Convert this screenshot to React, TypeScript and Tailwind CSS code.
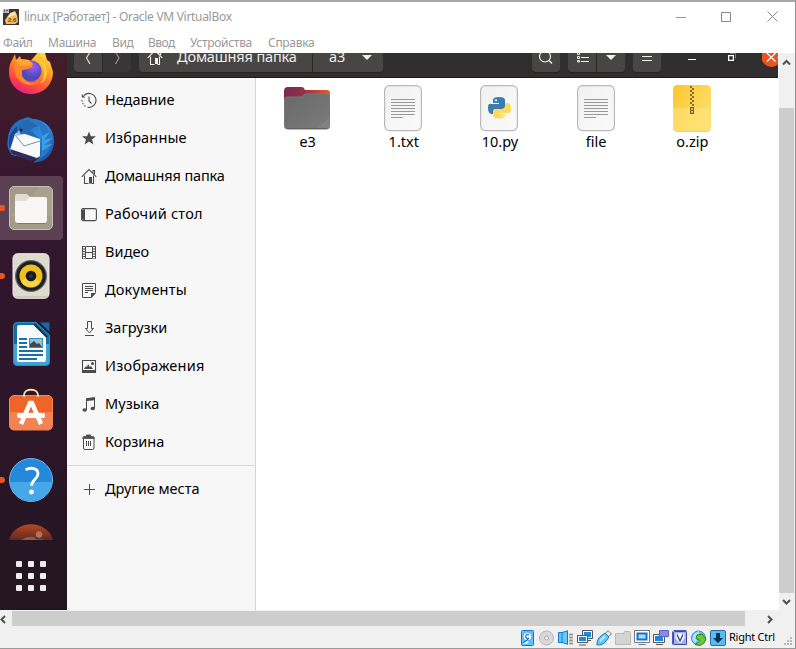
import React from "react";

const UI = "font-['Noto_Sans','Open_Sans',sans-serif]";

function Svg({ w, h, children, className = "" }: { w: number; h: number; children: React.ReactNode; className?: string }) {
  return (
    <svg width={w} height={h} viewBox={`0 0 ${w} ${h}`} className={`block shrink-0 ${className}`} fill="none">
      {children}
    </svg>
  );
}

/* ---------- host window ---------- */

function TitleBar() {
  return (
    <div className="flex h-[31px] shrink-0 items-center border-t-2 border-[#a8a8a8] bg-white pl-[3px]">
      <Svg w={16} h={16}>
        <rect width="16" height="16" fill="#34363b" />
        <path d="M0 0h6v4H0z" fill="#b9b9b9" />
        <path d="M1 1h1v2H1zM3 1h2v1H3z" fill="#555" />
        <path d="M2 11L7 4l5-2 2 4 1 7-3 2H3z" fill="#f6bd5c" />
        <path d="M4 9l4-5 4-1 1 3-4 1z" fill="#ffe6a0" />
        <text x="5" y="12.500" fontSize="6" fontWeight="bold" fill="#6b4415" fontFamily="Liberation Sans">2.6</text>
      </Svg>
      <span className="ml-[5px] text-[12px] tracking-[-0.3px] text-[#999]">linux [Работает] - Oracle VM VirtualBox</span>
      <div className="ml-auto flex items-center pr-[17px]">
        <Svg w={10} h={10}><path d="M0 5.5h10" stroke="#999" /></Svg>
        <Svg w={10} h={10} className="ml-[35px]"><path d="M.5.5h9v9h-9z" stroke="#888" /></Svg>
        <Svg w={11} h={11} className="ml-[36px]"><path d="M.5.5l10 10M10.500.5l-10 10" stroke="#888" /></Svg>
      </div>
    </div>
  );
}

function MenuBar() {
  return (
    <div className="flex h-[22px] shrink-0 items-center bg-white pl-[3px] pt-[2px] text-[12px] text-[#999]">
      <span className="w-[45px] tracking-[-0.4px]">Файл</span>
      <span className="w-[64px] tracking-[-0.25px]">Машина</span>
      <span className="w-[36px] tracking-[-0.4px]">Вид</span>
      <span className="w-[42px] tracking-[-0.5px]">Ввод</span>
      <span className="w-[78px] tracking-[-0.3px]">Устройства</span>
      <span className="tracking-[-0.3px]">Справка</span>
    </div>
  );
}

/* ---------- dock ---------- */

function Firefox() {
  return (
    <Svg w={46} h={46}>
      <defs>
        <linearGradient id="ff" x1=".8" y1="0" x2=".3" y2="1">
          <stop offset="0" stopColor="#ffe94a" /><stop offset=".4" stopColor="#ff9a26" />
          <stop offset=".75" stopColor="#ff4a3e" /><stop offset="1" stopColor="#e51a83" />
        </linearGradient>
        <radialGradient id="ffp" cx=".6" cy=".3"><stop stopColor="#a35cf5" /><stop offset="1" stopColor="#5049b8" /></radialGradient>
      </defs>
      <path d="M4 11l3-6 1 6 4-4 2 6 6 2 12-14 5 3 2 7 3 2 3 10c0 12-9 22-22 22S1 35 1 23C1 18 2 14 4 11z" fill="url(#ff)" />
      <circle cx="23" cy="22" r="10.500" fill="url(#ffp)" />
      <path d="M7 11l6-1 8 1 4 4-1 3-4 2-6 1v6c3 7 12 9 18 5-8 8-23 3-25-9z" fill="#ff8b25" />
      <path d="M7 11l6-1 8 1 4 4-6 2-7-1z" fill="#ffa436" />
      <path d="M32 3c0 6 6 9 7 17s-3 13-7 15c7-8 4-17-2-23-2-3-1-7 2-9z" fill="#ffc62e" />
    </Svg>
  );
}

function Thunderbird() {
  return (
    <Svg w={48} h={48}>
      <defs>
        <linearGradient id="tb" x1="0" y1="0" x2="1" y2="1"><stop stopColor="#1f65b5" /><stop offset=".55" stopColor="#2f8bdc" /><stop offset="1" stopColor="#153f91" /></linearGradient>
      </defs>
      <path d="M1 22c1-10 7-17 14-19l6-2 4 2c13 0 22 10 22 22 0 8-4 17-12 20l-9 2 6-5-9 1L5 39C0 32 0 28 1 22z" fill="url(#tb)" />
      <path d="M5 38C0 30 0 18 10 10l5 14-8 10z" fill="#1b4795" />
      <path d="M3 34L8 18l6-4 19 9v17l-5 3-17-4z" fill="#f8f9fb" />
      <path d="M8 19l9 11 16-5" stroke="#888d99" />
      <path d="M3 33l27 9-6 3-19-7z" fill="#302a60" />
      <path d="M10 14c1-8 8-12 16-10l7 7 4 14-4 17c13-4 15-25 5-32C29 0 15-1 10 14z" fill="#2a77c8" />
      <path d="M10 15c0-8 6-12 13-11l8 6-8 4 10 9-15-5-8 1z" fill="#2468b6" />
      <circle cx="14" cy="14" r="1.500" fill="#19232e" />
      <path d="M8 20l4-6 2 5z" fill="#8fc0df" />
      <path d="M35 20l8-4-6 8 9-2-9 7 9-1-11 7z" fill="#3c9fe6" />
    </Svg>
  );
}

function FilesApp() {
  return (
    <Svg w={44} h={44}>
      <rect x=".5" y=".5" width="43" height="43" rx="4.500" fill="#a39b87" stroke="#c6c0b1" />
      <path d="M1 30L31 1h8q4 0 4 4v25z" fill="#aaa28f" />
      <path d="M6 20V10q0-2 2-2h9q1 0 2 1l3 3v8z" fill="#e1ddd3" />
      <path d="M6 16q0-1 1-1h10l4-4h15q2 0 2 2v21q0 3-3 3H9q-3 0-3-3z" fill="#f8f7f5" />
      <path d="M8 37.500h28" stroke="#817968" />
    </Svg>
  );
}

function Rhythmbox() {
  return (
    <Svg w={38} h={46}>
      <rect x="1" y=".7" width="36" height="44.600" rx="4.500" fill="#dedacd" stroke="#f0eee7" />
      <path d="M2 44h34" stroke="#bdb8ab" />
      <circle cx="19" cy="23" r="16" fill="#5e6268" />
      <circle cx="19" cy="23" r="14.700" fill="#1c1e22" />
      <circle cx="19" cy="23" r="11.500" fill="#edc01d" />
      <path d="M19 23l-10 5c4 8 15 8 19 1z" fill="#f7d34a" />
      <circle cx="19" cy="23" r="5.300" fill="#17191c" />
      <circle cx="19" cy="23" r="2" fill="#33373c" />
    </Svg>
  );
}

function Writer() {
  return (
    <Svg w={37} h={44}>
      <path d="M4 .5h19L36.500 13v27q0 3.500-3.500 3.500H4Q.5 43.500.5 40V4Q.5.500 4 .500z" fill="#126da5" stroke="#2c8fc4" />
      <path d="M1 22h35v18q0 3-3 3H4q-3 0-3-3z" fill="#3ba3d6" />
      <path d="M4 5q0-2 2-2h15l12 12v23q0 2-2 2H6q-2 0-2-2z" fill="#f7f9fa" />
      <path d="M27 .5h9.500V10z" fill="#136b9f" /><path d="M21 2l13 13" stroke="#16324a" strokeWidth="2" />
      <path d="M6 17h8M6 21h8M6 25h8M6 29h24M6 33h24M6 37h18" stroke="#196fa6" strokeWidth="2" />
      <rect x="16" y="16" width="14" height="10" fill="#358fc2" />
      <rect x="17" y="17" width="12" height="8" fill="#8fc3e0" />
      <path d="M17 25v-3l4-3 3 3 2-1 3 4z" fill="#43494c" /><circle cx="27.500" cy="18.500" r="1.500" fill="#efbd1d" />
    </Svg>
  );
}

function Software() {
  return (
    <Svg w={44} h={44}>
      <rect x=".5" y="7.500" width="43" height="34.500" rx="4.500" fill="#ef6429" stroke="#ff8653" />
      <path d="M1 24h42v13q0 4.500-4 4.500H5q-4 0-4-4.500z" fill="#f28451" />
      <path d="M15 9V7c0-7 14-7 14 0v2" stroke="#f7d7a2" strokeWidth="2" />
      <path d="M12 36l9-21h2l9 21" stroke="#fff" strokeWidth="4.500" />
      <rect x="8" y="25" width="28" height="5" rx="2" fill="#fff" />
    </Svg>
  );
}

function Help() {
  return (
    <Svg w={44} h={44}>
      <circle cx="22" cy="22" r="21.500" fill="#2489dc" stroke="#6bb7ef" />
      <path d="M1 24h42c-1 11-10 19-21 19S2 35 1 24z" fill="#47a8e8" />
      <path d="M16.500 11.800c6-3 12.500-1.500 12.500 4 0 5-6.500 6-6.500 12" stroke="#fff" strokeWidth="2.800" />
      <circle cx="22.500" cy="34" r="2.400" fill="#fff" />
    </Svg>
  );
}

function Dot({ small = false }: { small?: boolean }) {
  return <div className={small ? "w-[9px] shrink-0" : "w-[12px] shrink-0"}><i className="block h-[6px] w-[5px] rounded-r-full bg-[#e95420]" /></div>;
}

function Dock() {
  return (
    <div className="flex w-[67px] shrink-0 flex-col overflow-hidden bg-linear-to-b from-[#451d29] via-[#34162f] via-25% to-[#231521]">
      <div className="flex h-[53px] shrink-0 items-end pb-[11px] pl-[8px]"><Firefox /></div>
      <div className="flex h-[68px] shrink-0 items-center pl-[7px]"><Thunderbird /></div>
      <div className="flex h-[68px] shrink-0 items-center">
        <div className="flex h-[64px] w-[63px] items-center rounded-r-[4px] bg-[#5b4053]"><Dot small /><FilesApp /></div>
      </div>
      <div className="flex h-[68px] shrink-0 items-center"><Dot /><Rhythmbox /></div>
      <div className="flex h-[68px] shrink-0 items-center pl-[13px]"><Writer /></div>
      <div className="flex h-[68px] shrink-0 items-start pl-[9px] pt-[10px]"><Software /></div>
      <div className="flex h-[68px] shrink-0 items-center"><Dot small /><Help /></div>
      <div className="h-[30px] shrink-0 pl-[9px] pt-[10px]">
        <Svg w={44} h={16}>
          <defs><linearGradient id="ub" x2="0" y2="1"><stop stopColor="#b84623" /><stop offset="1" stopColor="#60291f" /></linearGradient></defs>
          <path d="M0 16C6-5 38-5 44 16z" fill="url(#ub)" />
          <path d="M13 16q5-4 12-3l3 3z" fill="#91594c" /><circle cx="30" cy="10.500" r="3.200" fill="#ab7466" />
          <path d="M26 16q4-3 9 0z" fill="#80483c" />
        </Svg>
      </div>
      <div className="grid grid-cols-[6px_6px_6px] gap-[6px] pl-[16px] pt-[17px]">
        {Array.from({ length: 9 }, (_, i) => <i key={i} className="h-[6px] w-[6px] rounded-[1px] bg-[#f0eeec]" />)}
      </div>
    </div>
  );
}

/* ---------- file manager ---------- */

const HomePath = () => <path d="M.7 8.800L8 1.500l7.300 7.300M3.500 7.500v8h4M12.500 7.500v8h-2M12 4.500v-2h1.500V6" stroke="currentColor" strokeWidth="1.100" />;

const icons: Record<string, React.ReactNode> = {
  recent: <g stroke="currentColor" strokeWidth="1.100"><path d="M3 3.500A7 7 0 1 1 6.500 15.300" /><path d="M8 4.500v4.500l2.500 2.500" /><path d="M.8 2v3.500h3.500z" fill="currentColor" stroke="none" /><path d="M1 8c0 3 2 6 5 7" strokeDasharray="1.500 1.500" /></g>,
  star: <path d="M8 1.500l1.900 4.800h5L11 9.400l1.400 5.100L8 11.500l-4.400 3L5 9.400 1.100 6.300h5z" fill="currentColor" />,
  home: <><HomePath /><path d="M8 9h3v6.500H8z" fill="currentColor" /></>,
  desktop: <g><rect x=".6" y="2.600" width="14.800" height="12" rx="1.500" stroke="currentColor" strokeWidth="1.100" /><path d="M1 4l3-1v11l-3-.500z" fill="currentColor" /></g>,
  video: <g stroke="currentColor"><path d="M1.500 2v13M14.500 2v13M4.500 2.500h7v12h-7zM4.500 8.500h7" /><path d="M3 2v13M13 2v13" strokeWidth="2" strokeDasharray="1 1.500" /></g>,
  documents: <g stroke="currentColor"><path d="M1.500 1.500h13v9l-4 5h-9zM4 4.500h8M4 6.500h8M4 8.500h8M4 10.500h3" /><path d="M10 11h5l-5 5z" fill="currentColor" stroke="none" /></g>,
  downloads: <path d="M6.500 1.500h4v7h2L8.500 13l-4-4.500h2zM4 15.500h9" stroke="currentColor" />,
  pictures: <g><path d="M1.500 2.500h13v12h-13z" stroke="currentColor" strokeWidth="1.100" /><path d="M1 12h14v3H1zM3 11l2-3 1 1 1-3 2 3 1-1 2 3z" fill="currentColor" /><circle cx="11.500" cy="5.500" r="1.500" fill="currentColor" /></g>,
  music: <g fill="currentColor"><path d="M5 2.200l9-1.200v11h-1V4.200L6 5v9H5z" /><ellipse cx="3.700" cy="14" rx="2.200" ry="1.700" /><ellipse cx="11.800" cy="12.500" rx="2.200" ry="1.700" /></g>,
  trash: <g stroke="currentColor"><path d="M2.500 4.500V14q0 1.500 1.500 1.500h7.500q1.500 0 1.500-1.500V4.500M5.500 7v5M7.500 7v5M9.500 7v5" /><path d="M1.500 4.300h12l-1-1.600h-10zM5.500 2.500v-1.500h4v1.500" fill="currentColor" /></g>,
  plus: <path d="M8.500 3v11M3 8.500h11" stroke="currentColor" />,
};

const places = [
  ["recent", "Недавние", "tracking-[0px]"],
  ["star", "Избранные", "tracking-[0.15px]"],
  ["home", "Домашняя папка", "tracking-[-0.15px]"],
  ["desktop", "Рабочий стол", "tracking-[0.25px]"],
  ["video", "Видео", "tracking-[0.1px]"],
  ["documents", "Документы", "tracking-[0.2px]"],
  ["downloads", "Загрузки", "tracking-[0px]"],
  ["pictures", "Изображения", "tracking-[0.25px]"],
  ["music", "Музыка", "tracking-[0.05px]"],
  ["trash", "Корзина", "tracking-[0px]"],
];

function Place({ icon, label, tracking }: { icon: string; label: string; tracking: string }) {
  return (
    <div className="flex h-[38px] items-center pl-[14px] text-[#4c4c4c]">
      <Svg w={16} h={17}>{icons[icon]}</Svg>
      <span className={`ml-[8px] whitespace-nowrap pb-px text-[14.5px] text-black ${tracking}`}>{label}</span>
    </div>
  );
}

function HeaderBar() {
  const btn = "h-[19px] shrink-0 bg-[#484644] shadow-[0_1px_0_#222]";
  return (
    <div className="flex h-[25px] shrink-0 overflow-hidden border-b border-[#1c1b1b] bg-[#302e2f] pl-[7px] text-[#eee]">
      <div className={`${btn} flex w-[29px] justify-center rounded-bl-[4px] border-r border-[#292828]`}><Svg w={12} h={15}><path d="M8-1L4.500 5 8 11" stroke="#ddd" strokeWidth="1.200" /></Svg></div>
      <div className="flex h-[19px] w-[28px] shrink-0 justify-center rounded-br-[4px] bg-[#383637]"><Svg w={12} h={15}><path d="M4.500-1L8 5l-3.500 6" stroke="#999" strokeWidth="1.100" /></Svg></div>
      <div className={`${btn} ml-[8px] flex w-[174px] overflow-hidden rounded-bl-[4px] border-r border-[#292828] pl-[8px]`}>
        <Svg w={16} h={17} className="-mt-[4px]"><HomePath /><path d="M8 9h3v6H8z" fill="currentColor" /></Svg>
        <span className="-mt-[7px] ml-[14px] whitespace-nowrap text-[14.5px] leading-[20px] tracking-[-0.15px]">Домашняя папка</span>
      </div>
      <div className={`${btn} flex w-[70px] overflow-hidden rounded-br-[4px] pl-[16px]`}>
        <span className="-mt-[7px] text-[14.5px] leading-[20px]">а3</span>
        <Svg w={10} h={8} className="ml-[17px] mt-[2px]"><path d="M0 0h10L5 5z" fill="#eee" /></Svg>
      </div>
      <div className={`${btn} ml-[149px] flex w-[28px] justify-center rounded-b-[4px]`}>
        <Svg w={16} h={14}><circle cx="7" cy="3.500" r="5.500" stroke="#eee" strokeWidth="1.200" /><path d="M11 7.500l3 3" stroke="#eee" strokeWidth="1.400" /></Svg>
      </div>
      <div className={`${btn} ml-[8px] flex w-[29px] justify-center rounded-bl-[4px] border-r border-[#292828]`}>
        <Svg w={13} h={11}><path d="M1.500 0v1.500h2V0M1.500 3.500h2v2h-2zM1.500 7.500h2v1.500h-2zM5 4.500h8M5 8.500h8" stroke="#eee" /></Svg>
      </div>
      <div className={`${btn} flex w-[28px] justify-center rounded-br-[4px]`}><Svg w={10} h={8} className="mt-[2px]"><path d="M0 0h10L5 5z" fill="#eee" /></Svg></div>
      <div className={`${btn} ml-[8px] flex w-[28px] justify-center rounded-b-[4px]`}><Svg w={10} h={10}><path d="M0 3.500h10M0 7.500h10" stroke="#eee" /></Svg></div>
      <Svg w={8} h={9} className="ml-[27px]"><path d="M0 6.500h8" stroke="#fff" /></Svg>
      <Svg w={8} h={9} className="ml-[32px]"><path d="M.6 2.600h4.800v4.800H.6z" stroke="#fff" strokeWidth="1.200" /><path d="M2 .5h5.500v5" stroke="#777" /></Svg>
      <Svg w={17} h={15} className="ml-[26px]"><circle cx="9.500" cy="4" r="10" fill="#e95420" /><path d="M5 0l8.500 8.500M13.500 0L5 8.500" stroke="#fff" strokeWidth="1.300" /></Svg>
    </div>
  );
}

function FolderIcon() {
  return (
    <Svg w={47} h={46}>
      <defs>
        <linearGradient id="fl"><stop stopColor="#772953" /><stop offset=".45" stopColor="#95324a" /><stop offset="1" stopColor="#ed592b" /></linearGradient>
        <linearGradient id="fg" x2="1" y2="1"><stop stopColor="#686868" /><stop offset="1" stopColor="#7c7c7c" /></linearGradient>
      </defs>
      <path d="M0 6q0-4 4-4h14q2 0 3 3h22q3 0 3 3v15H0z" fill="url(#fl)" />
      <path d="M.5 15q0-3 3-3H16q2 0 4-2t4-1h19q2.500 0 2.500 3v29q0 3-2.500 3h-39.500q-3 0-3-3z" fill="url(#fg)" stroke="#787878" />
      <path d="M34 43l11-10v8q0 2-2 2z" fill="#828282" />
      <path d="M3 43.500h40" stroke="#626262" />
    </Svg>
  );
}

function Sheet({ children }: { children: React.ReactNode }) {
  return (
    <Svg w={38} h={47}>
      <defs><linearGradient id="sh" x2="1" y2="1"><stop stopColor="#f1f1f1" /><stop offset="1" stopColor="#fafafa" /></linearGradient></defs>
      <rect x=".6" y=".6" width="36.800" height="45" rx="5" fill="url(#sh)" stroke="#b9b9b9" strokeWidth="1.200" />
      {children}
    </Svg>
  );
}

const TextIcon = () => <Sheet><path d="M7 14.500h24M7 17.500h24M7 20.500h24M7 23.500h24M7 26.500h24M7 29.500h24M7 32.500h12" stroke="#999" /></Sheet>;

const PythonIcon = () => (
  <Sheet>
    <g transform="translate(8 12)">
      <path d="M5 6V3q0-3 6-3t6 3v6q0 3-3 3H8q-3 0-3 4v1H3q-3-1-3-6t3-4h8V6H5z" fill="#3e7cac" />
      <path d="M17 6h3q3 1 3 5.500T20 16h-9v1h6v1q0 3-5 3.500-7 0-7-3.500v-3q0-3 3-3h6q3 0 3-3z" fill="#ffd95b" />
      <circle cx="8" cy="3.300" r="1.100" fill="#f5f5f5" /><circle cx="14.200" cy="18.800" r="1.100" fill="#f5f5f5" />
    </g>
  </Sheet>
);

function ZipIcon() {
  return (
    <Svg w={38} h={47}>
      <defs><linearGradient id="zi" x2="1" y2=".6"><stop stopColor="#fbc72c" /><stop offset="1" stopColor="#ffdd6a" /></linearGradient></defs>
      <rect y="1" width="38" height="46" rx="4.500" fill="#ddd1a7" />
      <rect width="38" height="46" rx="4.500" fill="url(#zi)" />
      <path d="M0 23h38v18q0 5-5 5H5q-5 0-5-5z" fill="#ffe279" opacity=".65" />
      <path d="M18 1v20" stroke="#826f2f" strokeWidth="2" strokeDasharray="2 2" />
      <path d="M20 3v18" stroke="#826f2f" strokeWidth="2" strokeDasharray="2 2" />
      <path d="M17.600 22.600h2.800v5.800h-2.800zM18 25.500h2" stroke="#74652f" strokeWidth="1.200" />
    </Svg>
  );
}

const files: [string, React.ReactNode][] = [
  ["е3", <FolderIcon />], ["1.txt", <TextIcon />], ["10.py", <PythonIcon />], ["file", <TextIcon />], ["o.zip", <ZipIcon />],
];

function FileManager() {
  return (
    <div className="flex min-w-0 flex-1 flex-col">
      <HeaderBar />
      <div className="flex min-h-0 flex-1">
        <nav className="w-[189px] shrink-0 border-r border-[#d6d6d6] bg-[#f7f7f7] pt-[3px]">
          {places.map(([i, l, t]) => <Place key={l} icon={i} label={l} tracking={t} />)}
          <div className="mb-[4px] mt-[4px] h-px bg-[#d9d9d9]" />
          <Place icon="plus" label="Другие места" tracking="tracking-[0px]" />
        </nav>
        <main className="flex flex-1 items-start bg-white pl-[3px] pt-[7px]">
          {files.map(([name, icon]) => (
            <div key={name} className="flex w-[96.200px] shrink-0 flex-col items-center">
              <div className="flex h-[46px] items-start">{icon}</div>
              <span className="pl-px text-[14.5px] leading-[20px] text-black">{name}</span>
            </div>
          ))}
        </main>
      </div>
    </div>
  );
}

/* ---------- status bar ---------- */

const B = "#1673c9";
const status: React.ReactNode[] = [
  <g key="0"><rect x="1.500" y=".5" width="12" height="15" rx="1" fill="#58c6ff" stroke={B} /><circle cx="7.500" cy="6.500" r="4.500" fill="#f5fbff" stroke="#4c9fd8" /><path d="M9 5a2 2 0 1 0 0 3l-3 3-3 2" stroke={B} strokeWidth="1.300" /><path d="M3 14l4-3 2 1-3 2z" fill="#fff" /></g>,
  <g key="1"><circle cx="7.500" cy="8" r="7" fill="#d9d9d9" stroke="#b5b5b5" /><circle cx="7.500" cy="8" r="2" fill="#eee" stroke="#aaa" /></g>,
  <g key="2"><path d="M11 3h4v12h-4z" fill="#c9c9c9" /><path d="M11 4.500h4M11 7.500h4M11 10.500h4M11 13.500h4" stroke="#999" /><path d="M.5 2.500h3.500L9.500.8v13.500L4 12.500H.5z" fill="#62cbff" stroke={B} /><path d="M4 3v9" stroke={B} /></g>,
  <g key="3"><path d="M5.500.5h10v8h-10zM8 10.500h6" fill="#fff" stroke="#555" /><path d="M7 2h7v5H7z" fill="#158ee5" /><path d="M.5 5.500h10v7H.5zM2 15h7" fill="#fff" stroke="#555" /><path d="M2 7h7v4H2z" fill="#158ee5" /></g>,
  <g key="4"><path d="M9 4l3-3.500L15.500 4 12 7z" fill="#eee" stroke="#777" /><path d="M1 15c0-4 1-7 4-9l4-3 4 4-3 4c-2 3-5 4-9 4z" fill="#65caff" stroke={B} /><path d="M4 11l5-5" stroke="#d9f5ff" strokeWidth="1.500" /></g>,
  <g key="5"><path d="M.5 3.500h8l1-2h5l1 2v11H.5z" fill="#d4d4d4" stroke="#b8b8b8" /></g>,
  <g key="6"><path d="M.5.5h15v12H.5zM4.500 14.500h7" fill="#fff" stroke="#777" /><path d="M3.500 3.500h9v6h-9z" fill="#a4dfff" stroke={B} strokeWidth="2" /></g>,
  <g key="7"><path d="M.5 4.500h11v8H.5zM3 14.500h7" fill="#fff" stroke="#555" /><path d="M2 6h8v5H2z" fill="#1688df" /><path d="M6.500.5h9v6h-9z" fill="#848bea" stroke="#5c64c8" /></g>,
  <g key="8"><path d="M0 8h16" stroke="#555caf" strokeWidth="13" strokeDasharray="1 1" /><path d="M8 0v16" stroke="#555caf" strokeWidth="13" strokeDasharray="1 1" /><rect x="1.500" y="1.500" width="13" height="13" rx="1" fill="#a4afef" stroke="#3f489f" /><path d="M3.500 3.500h9v4L9 13H7L3.500 7.500z" fill="#fff" /><path d="M5 4.500L8 11l3-6.500" stroke="#454d99" strokeWidth="1.500" /></g>,
  <g key="9"><circle cx="7.500" cy="8" r="7" fill="#5ec5f6" stroke="#418ebd" /><path d="M3 4l5-3v7l-4 5-3-4z" fill="#a7e8fc" /><path d="M6 5l5-1 4 5-2 4-4 2.500-5-1 3-2 2-2-4-2z" fill="#6bc936" stroke="#387d22" /></g>,
  <g key="10"><rect x=".5" y=".5" width="15" height="15" rx="1.500" fill="#58bcf2" stroke="#246da9" /><path d="M3 8h3V3h4v5h3l-5 5z" fill="#09334e" /></g>,
];

function StatusBar() {
  return (
    <div className="flex min-h-0 flex-1 items-center justify-end border-b border-[#999] bg-[#f0f0f0]">
      <div className="flex gap-[3px]">{status.map((s, i) => <Svg key={i} w={16} h={16}>{s}</Svg>)}</div>
      <span className="ml-[3px] w-[48px] whitespace-nowrap text-[11px] tracking-[-0.25px] text-black">Right Ctrl</span>
      <Svg w={9} h={9} className="ml-[7px] mr-[2px] mt-[8px]"><path d="M6 0h2v2H6zM3 3h2v2H3zM6 3h2v2H6zM0 6h2v2H0zM3 6h2v2H3zM6 6h2v2H6z" fill="#bbb" /></Svg>
    </div>
  );
}

const Arrow = ({ d }: { d: string }) => <Svg w={9} h={9}><path d={d} stroke="#505050" strokeWidth="2" /></Svg>;

export default function App() {
  return (
    <div className={`flex h-[649px] w-[796px] flex-col overflow-hidden border-r border-[#929292] bg-white ${UI}`}>
      <TitleBar />
      <MenuBar />
      <div className="flex h-[557px] shrink-0">
        <div className="flex w-[778px] shrink-0 overflow-hidden"><Dock /><FileManager /></div>
        <div className="ml-px flex w-[15px] shrink-0 flex-col items-center bg-[#f0f0f0]">
          <div className="flex h-[55px] items-start pt-[5px]"><Arrow d="M1 6.500L4.500 3 8 6.500" /></div>
          <div className="w-full flex-1 bg-[#cdcdcd]" />
          <div className="flex h-[17px] items-center"><Arrow d="M1 3l3.500 3.500L8 3" /></div>
        </div>
        <div className="flex-1 bg-[#f0f0f0]" />
      </div>
      <div className="flex h-[17px] shrink-0 bg-[#f0f0f0] pt-px">
        <div className="flex w-[12px] items-center"><Arrow d="M5 1L1.500 4.500 5 8" /></div>
        <div className="h-[15px] w-[733px] bg-[#cdcdcd]" />
        <div className="flex w-[34px] items-center justify-end pr-[5px]"><Arrow d="M3 1l3.500 3.500L3 8" /></div>
      </div>
      <StatusBar />
    </div>
  );
}
